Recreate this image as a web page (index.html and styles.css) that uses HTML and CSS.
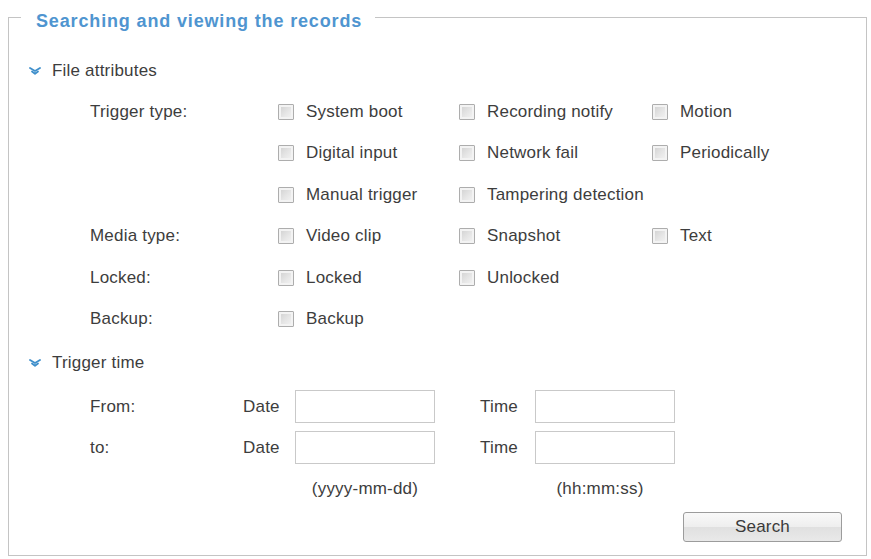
FILE: index.html
```html
<!DOCTYPE html>
<html lang="en">
<head>
<meta charset="utf-8">
<title>Searching and viewing the records</title>
<link rel="stylesheet" href="styles.css">
</head>
<body>
<fieldset class="panel">
  <legend class="panel-title">Searching and viewing the records</legend>
  <div class="panel-body">
    <div class="section-head">
      <svg class="chev" viewBox="0 0 12 8" width="12" height="8" aria-hidden="true">
        <path d="M1 1 L6 4 L11 1" fill="none" stroke="#3f8fcb" stroke-width="1.8" stroke-linecap="round" stroke-linejoin="round"/>
        <path d="M3 4.5 L6 6.8 L9 4.5" fill="none" stroke="#3f8fcb" stroke-width="1.8" stroke-linecap="round" stroke-linejoin="round"/>
      </svg>
      <span>File attributes</span>
    </div>
    <div class="attr-grid">
      <div class="label">Trigger type:</div>
      <label class="opt"><input type="checkbox" class="cb"><span>System boot</span></label>
      <label class="opt"><input type="checkbox" class="cb"><span>Recording notify</span></label>
      <label class="opt"><input type="checkbox" class="cb"><span>Motion</span></label>

      <div class="label"></div>
      <label class="opt"><input type="checkbox" class="cb"><span>Digital input</span></label>
      <label class="opt"><input type="checkbox" class="cb"><span>Network fail</span></label>
      <label class="opt"><input type="checkbox" class="cb"><span>Periodically</span></label>

      <div class="label"></div>
      <label class="opt"><input type="checkbox" class="cb"><span>Manual trigger</span></label>
      <label class="opt"><input type="checkbox" class="cb"><span>Tampering detection</span></label>
      <div></div>

      <div class="label">Media type:</div>
      <label class="opt"><input type="checkbox" class="cb"><span>Video clip</span></label>
      <label class="opt"><input type="checkbox" class="cb"><span>Snapshot</span></label>
      <label class="opt"><input type="checkbox" class="cb"><span>Text</span></label>

      <div class="label">Locked:</div>
      <label class="opt"><input type="checkbox" class="cb"><span>Locked</span></label>
      <label class="opt"><input type="checkbox" class="cb"><span>Unlocked</span></label>
      <div></div>

      <div class="label">Backup:</div>
      <label class="opt"><input type="checkbox" class="cb"><span>Backup</span></label>
      <div></div>
      <div></div>
    </div>

    <div class="section-head section-head-time">
      <svg class="chev" viewBox="0 0 12 8" width="12" height="8" aria-hidden="true">
        <path d="M1 1 L6 4 L11 1" fill="none" stroke="#3f8fcb" stroke-width="1.8" stroke-linecap="round" stroke-linejoin="round"/>
        <path d="M3 4.5 L6 6.8 L9 4.5" fill="none" stroke="#3f8fcb" stroke-width="1.8" stroke-linecap="round" stroke-linejoin="round"/>
      </svg>
      <span>Trigger time</span>
    </div>
    <div class="time-grid">
      <div class="label">From:</div>
      <div class="sub">Date</div>
      <input type="text" class="field">
      <div></div>
      <div class="sub">Time</div>
      <input type="text" class="field">

      <div class="label">to:</div>
      <div class="sub">Date</div>
      <input type="text" class="field">
      <div></div>
      <div class="sub">Time</div>
      <input type="text" class="field">

      <div></div>
      <div></div>
      <div class="hint">(yyyy-mm-dd)</div>
      <div></div>
      <div></div>
      <div class="hint hint-time">(hh:mm:ss)</div>
    </div>
    <div class="actions">
      <button type="button" class="btn">Search</button>
    </div>
  </div>
</fieldset>
</body>
</html>
```

FILE: styles.css
```css
html, body {
  margin: 0;
  padding: 0;
  background: #ffffff;
}

body {
  font-family: "Liberation Sans", Arial, sans-serif;
  font-size: 17px;
  color: #3d3d3d;
  letter-spacing: 0.2px;
}

.panel {
  margin: 2px 4px 0 8px;
  padding: 0;
  border: 1px solid #c4c4c4;
  min-width: 0;
}

.panel-title {
  margin-left: 12px;
  padding: 8px 13px 0 15px;
  font-size: 18px;
  line-height: 22px;
  font-weight: bold;
  letter-spacing: 0.85px;
  color: #4f95d0;
}

.panel-body {
  padding-top: 19px;
  padding-bottom: 13px;
}

.section-head {
  height: 40px;
  display: flex;
  align-items: center;
  padding-left: 20px;
}

.section-head-time {
  height: 46px;
}

.chev {
  flex: none;
  margin-right: 11px;
}

.attr-grid {
  margin-left: 81px;
  display: grid;
  grid-template-columns: 188px 181px 193px 1fr;
  grid-auto-rows: 41.5px;
  align-items: center;
}

.label {
  white-space: nowrap;
}

.opt {
  display: flex;
  align-items: center;
  white-space: nowrap;
}

.cb {
  appearance: none;
  -webkit-appearance: none;
  margin: 0 12px 0 0;
  width: 16px;
  height: 16px;
  flex: none;
  border: 1px solid #adadad;
  border-radius: 1px;
  background: linear-gradient(135deg, #cfcfcf 0%, #e6e6e6 55%, #f5f5f5 100%);
  box-shadow: inset 0 0 0 2px #f3f3f3;
}

.time-grid {
  margin-left: 81px;
  display: grid;
  grid-template-columns: 153px 52px 140px 45px 55px 140px;
  grid-template-rows: 41px 41px 42px;
  align-items: center;
}

.sub {
  white-space: nowrap;
}

.field {
  box-sizing: border-box;
  width: 140px;
  height: 33px;
  margin: 0;
  border: 1px solid #c9c9c9;
  background: #ffffff;
  font: inherit;
  padding: 0 4px;
}

.hint {
  text-align: center;
  white-space: nowrap;
  font-size: 17px;
}

.hint-time {
  padding-right: 10px;
}

.actions {
  display: flex;
  justify-content: flex-end;
  padding-right: 24px;
  margin-top: 2px;
}

.btn {
  box-sizing: border-box;
  width: 159px;
  height: 30px;
  margin: 0;
  border: 1px solid #9c9c9c;
  border-radius: 3px;
  background: linear-gradient(to bottom, #f9f9f9 0%, #eeeeee 50%, #e0e0e0 51%, #e9e9e9 100%);
  font-family: "Liberation Sans", Arial, sans-serif;
  font-size: 17px;
  color: #3a3a3a;
  letter-spacing: 0.2px;
  padding: 0;
}
```
